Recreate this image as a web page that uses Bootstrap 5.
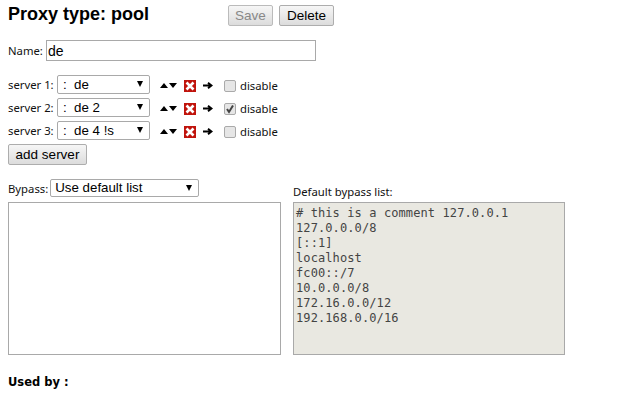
<!DOCTYPE html>
<html lang="en"><head><meta charset="utf-8"><title>Proxy</title>
<link href="https://cdn.jsdelivr.net/npm/bootstrap@5.3.0/dist/css/bootstrap.min.css" rel="stylesheet">
<style>
html,body{background:#fff;overflow:hidden}
body{font:11.3px/15px "Noto Sans",sans-serif;color:#111;padding:5px 8px 0;height:400px}
.head-row{height:20px}
.ttl{font:700 18px/18px "Liberation Sans",sans-serif;margin:0;width:220px;color:#000}
.pbtn{font:13.5px/16px "Liberation Sans",sans-serif;height:21px;padding:0;border:1px solid #adadad;border-radius:2px;background:linear-gradient(#f6f6f6,#dcdcdc);color:#000}
.pbtn:disabled{color:#888;border-color:#bbb}
.btn-save{width:45px}
.btn-del{width:55px;margin-left:6px}
.btn-add{width:79px;display:block}
.name-row{margin-top:15px;height:21px}
.name-in{width:270px;height:21px;border:1px solid #a9a9a9;font:14px "Liberation Sans",sans-serif;padding:0 1px;margin-left:3px;color:#000}
.srv-list{margin-top:14px}
.srv-row{height:19px;margin-bottom:4px}
.srv-lbl{width:49px}
.psel{border:1px solid #a9a9a9;border-radius:2px;background:#fff;font:13.3px/16px "Liberation Sans",sans-serif;color:#000;position:relative;display:flex;align-items:center;white-space:pre;padding-left:5px}
.psel::after{content:"";position:absolute;right:6px;top:5px;border:3.5px solid transparent;border-top:6px solid #000;border-bottom:0}
.srv-sel{width:93px;height:19px}
.ico-ud{margin-left:10px;margin-top:2px}
.ico-x{margin-left:7px;margin-top:2px}
.ico-ar{margin-left:7px;margin-top:2px}
.chk{width:12px;height:12px;border:1px solid #aaa;border-radius:2px;background:#e6e6e6;margin-left:11px;margin-right:4px;margin-top:2px;flex:none}
.dis{margin-top:2px}
.by-row{margin-top:14px}
.by-left{width:273px}
.by-sel{width:149px;height:18px;margin-left:2px;padding-left:4px}
.by-area{width:273px;height:153px;border:1px solid #a9a9a9;margin-top:5px}
.by-right{margin-left:12px;width:272px}
.by-lab{margin-top:5px}
.by-pre{height:153px;margin:3px 0 0;border:1px solid #a9a9a9;background:#e9e8e1;font:12px/15px "DejaVu Sans Mono",monospace;letter-spacing:.1px;color:#444;padding:3px 2px;overflow:hidden}
.usedby{font:700 11.5px/15px "DejaVu Sans",sans-serif;margin-top:20px;color:#000}
</style></head><body>
<div class="d-flex align-items-start head-row">
<h1 class="ttl">Proxy type: pool</h1>
<button class="pbtn btn-save" disabled>Save</button><button class="pbtn btn-del">Delete</button>
</div>
<div class="d-flex align-items-center name-row"><span>Name:</span><input class="name-in" value="de"></div>
<div class="srv-list">
<div class="d-flex align-items-center srv-row"><span class="srv-lbl">server 1:</span><div class="psel srv-sel">:  de</div>
<svg class="ico-ud" width="17" height="5" viewBox="0 0 17 5"><path d="M0 5 4 0 8 5Z M9 0H17L13 5Z"/></svg><svg class="ico-x" width="12" height="12" viewBox="0 0 12 12"><rect width="12" height="12" fill="#c0140c"/><path d="M2.500 2.500 9.500 9.500M9.500 2.500 2.500 9.500" stroke="#fff" stroke-width="2.600"/></svg><svg class="ico-ar" width="10" height="7" viewBox="0 0 10 7"><path d="M0 3.500H8M5 .8 8.500 3.500 5 6.200" fill="none" stroke="#000" stroke-width="2"/></svg>
<span class="chk"></span><span class="dis">disable</span></div>
<div class="d-flex align-items-center srv-row"><span class="srv-lbl">server 2:</span><div class="psel srv-sel">:  de 2</div>
<svg class="ico-ud" width="17" height="5" viewBox="0 0 17 5"><path d="M0 5 4 0 8 5Z M9 0H17L13 5Z"/></svg><svg class="ico-x" width="12" height="12" viewBox="0 0 12 12"><rect width="12" height="12" fill="#c0140c"/><path d="M2.500 2.500 9.500 9.500M9.500 2.500 2.500 9.500" stroke="#fff" stroke-width="2.600"/></svg><svg class="ico-ar" width="10" height="7" viewBox="0 0 10 7"><path d="M0 3.500H8M5 .8 8.500 3.500 5 6.200" fill="none" stroke="#000" stroke-width="2"/></svg>
<span class="chk d-flex align-items-center justify-content-center"><svg width="10" height="10" viewBox="0 0 10 10"><path d="M2 5 4 8 8 1.500" fill="none" stroke="#444" stroke-width="2"/></svg></span><span class="dis">disable</span></div>
<div class="d-flex align-items-center srv-row"><span class="srv-lbl">server 3:</span><div class="psel srv-sel">:  de 4 !s</div>
<svg class="ico-ud" width="17" height="5" viewBox="0 0 17 5"><path d="M0 5 4 0 8 5Z M9 0H17L13 5Z"/></svg><svg class="ico-x" width="12" height="12" viewBox="0 0 12 12"><rect width="12" height="12" fill="#c0140c"/><path d="M2.500 2.500 9.500 9.500M9.500 2.500 2.500 9.500" stroke="#fff" stroke-width="2.600"/></svg><svg class="ico-ar" width="10" height="7" viewBox="0 0 10 7"><path d="M0 3.500H8M5 .8 8.500 3.500 5 6.200" fill="none" stroke="#000" stroke-width="2"/></svg>
<span class="chk"></span><span class="dis">disable</span></div>
</div>
<button class="pbtn btn-add">add server</button>
<div class="d-flex by-row">
<div class="by-left"><div class="d-flex align-items-center"><span>Bypass:</span><div class="psel by-sel">Use default list</div></div><div class="by-area"></div></div>
<div class="by-right"><div class="by-lab">Default bypass list:</div><pre class="by-pre"># this is a comment 127.0.0.1
127.0.0.0/8
[::1]
localhost
fc00::/7
10.0.0.0/8
172.16.0.0/12
192.168.0.0/16</pre></div>
</div>
<div class="usedby">Used by :</div>
</body></html>
